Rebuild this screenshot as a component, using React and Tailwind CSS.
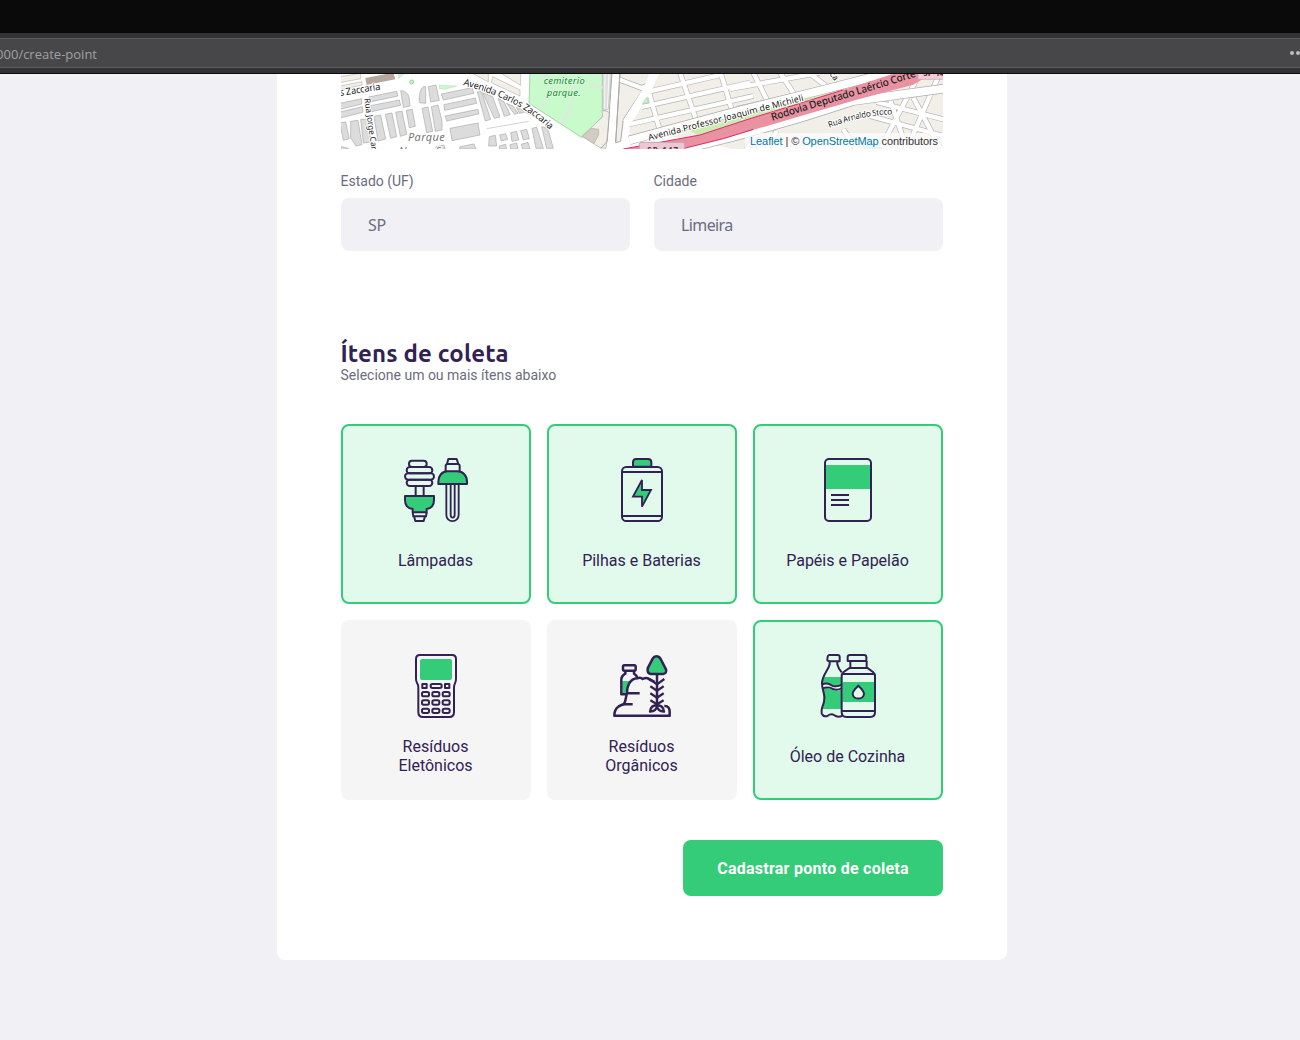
const INK = '#322153';
const GREEN = '#34CB79';

function Icon({ children }) {
  return (
    <svg
      viewBox="0 0 240 240"
      className="h-20 w-20 shrink-0"
      fill="none"
      stroke={INK}
      strokeWidth="6"
      strokeLinejoin="round"
      strokeLinecap="butt"
    >
      {children}
    </svg>
  );
}

function LampIcon() {
  return (
    <Icon>
      <rect x="39" y="32" width="53" height="19" rx="9" />
      <rect x="32" y="51" width="77" height="19" rx="9.500" />
      <rect x="27" y="70" width="87" height="19" rx="9.500" />
      <rect x="32" y="89" width="77" height="19" rx="9.500" />
      <path d="M59 108V138M83 108V138" />
      <path d="M27 138H114V150C114 166 105 175 92 177V187H50V177C36 175 27 166 27 150Z" fill={GREEN} />
      <path d="M50 187L52 199H90L92 187M54 199L58 213H83L87 199" />
      <path d="M153 42L157 27H182L187 42M149 64V48Q149 42 155 42H185Q191 42 191 48V64" />
      <path d="M127 102V95C127 77 138 64 155 64H184C201 64 213 77 213 95V102Z" fill={GREEN} />
      <path d="M151 102V195A18.500 18.500 0 0 0 188 195V102M164 102V195A5.500 7 0 0 0 176 195V102" strokeWidth="5.500" />
    </Icon>
  );
}

function BatteryIcon() {
  return (
    <Icon>
      <path d="M93 50V37Q93 27 103 27H138Q148 27 148 37V50Z" fill={GREEN} />
      <rect x="60" y="51" width="120" height="162" rx="13" />
      <path d="M60 66H180M60 198H180" />
      <path d="M120 90V120H147L120 170V140H93Z" fill={GREEN} strokeWidth="5.500" strokeLinejoin="miter" />
    </Icon>
  );
}

function PaperIcon() {
  return (
    <Icon>
      <rect x="53" y="45" width="134" height="72" fill={GREEN} stroke="none" />
      <rect x="51" y="27" width="138" height="186" rx="12" />
      <path d="M69 135H123M69 150H123M69 165H123" />
    </Icon>
  );
}

function TerminalIcon() {
  return (
    <Icon>
      <path d="M72 27H168Q180 27 180 39V99C180 112 174 112 174 124V198Q174 213 160 213H81Q67 213 67 198V124C67 112 60 112 60 99V39Q60 27 72 27Z" />
      <rect x="72" y="39" width="96" height="63" rx="6" fill={GREEN} stroke="none" />
      <g strokeWidth="6">
        <rect x="79" y="114" width="13" height="12" />
        <rect x="104" y="114" width="33" height="12" rx="5" />
        <rect x="147" y="114" width="13" height="12" />
        {[138, 163, 188].map((y) => (
          <g key={y}>
            <rect x="78" y={y} width="21" height="13" rx="5" />
            <rect x="109" y={y} width="21" height="13" rx="5" />
            <rect x="140" y={y} width="21" height="13" rx="5" />
          </g>
        ))}
      </g>
    </Icon>
  );
}

function OrganicIcon() {
  return (
    <Icon>
      <path d="M61 105H86L76 119L70 143H61Z" fill={GREEN} stroke="none" />
      <g strokeWidth="7.500">
        <rect x="63" y="58" width="38" height="16" rx="4" />
        <path d="M70 74V83Q58 90 58 101V145H75M96 74V83Q104 88 106 96" />
        <path d="M163 31Q156 31 152 38L137 67Q135 82 146 84H184Q195 82 192 70L176 39Q171 31 163 31Z" fill={GREEN} />
        <path d="M113 142H75C72 149 72 164 66 174Q56 178 49 182Q37 190 37 209H203V198Q203 179 187 180" />
        <path d="M92 175H63M75 142C75 115 87 98 106 97Q116 93 122 99Q135 92 145 102L157 107" />
        <path d="M165 84V181" />
        <path d="M143 99L165 115L187 99M145 121L165 134L185 121M145 142L165 155L185 142M145 163L165 175L185 163" strokeWidth="7" />
        <path d="M165 177Q146 178 144 197L154 195Q165 190 165 177Q165 190 176 195L186 197Q184 178 165 177ZM165 177V185" strokeWidth="7" />
      </g>
    </Icon>
  );
}

function OilIcon() {
  return (
    <Icon>
      <path d="M47 93H101V117C80 126 74 111 43 114ZM43 128Q64 123 74 131T101 130V189H41L48 165Z" fill={GREEN} stroke="none" />
      <rect x="104" y="108" width="94" height="60" fill={GREEN} stroke="none" />
      <path d="M64 46L58 43Q58 27 64 27H89Q95 27 95 33V46Z" />
      <path d="M65 46V55C61 73 42 89 42 112C42 138 54 142 48 167C43 186 38 190 41 202Q46 214 58 210Q69 202 78 207Q88 215 102 210M88 46V55Q91 68 101 79" />
      <path d="M42 116C59 107 66 117 76 120Q88 123 102 116M43 128C61 120 67 125 75 129Q88 134 102 126" />
      <path d="M119 45V33Q119 27 126 27H168Q175 27 175 33V45Z" />
      <path d="M127 45V64L107 78Q101 83 101 91V199Q101 213 115 213H187Q201 213 201 199V91Q201 83 195 78L176 64V45M124 66H178M104 84H198M102 195H200" />
      <path d="M151 119Q133 136 134 144C136 162 166 162 168 144Q169 136 151 119Z" fill="#E1FAEC" />
    </Icon>
  );
}

const items = [
  { icon: LampIcon, title: 'Lâmpadas', selected: true },
  { icon: BatteryIcon, title: 'Pilhas e Baterias', selected: true },
  { icon: PaperIcon, title: 'Papéis e Papelão', selected: true },
  { icon: TerminalIcon, title: 'Resíduos Eletônicos', selected: false },
  { icon: OrganicIcon, title: 'Resíduos Orgânicos', selected: false },
  { icon: OilIcon, title: 'Óleo de Cozinha', selected: true },
];

function MapView() {
  const halo = { stroke: '#fff', strokeWidth: 6, paintOrder: 'stroke', strokeLinejoin: 'round' };
  return (
    <div className="relative h-[75px] w-full overflow-hidden">
      <svg viewBox="341 74 602 75" className="block h-full w-full" fontFamily='"Noto Sans", sans-serif'>
        <rect x="341" y="73" width="602" height="76" fill="#fff" />

        {/* west side: city blocks */}
        <g transform="translate(330 66) scale(.33333)">
          <g fill="#f2efe9" stroke="#bbb5ad" strokeWidth="2">
            <path d="M30 32L92 22V38L30 50ZM30 60L96 47V57L30 72ZM425 20H475V48ZM488 32L570 72V90L484 50ZM510 20H572V58Z" />
          </g>
          <path d="M106 36L190 20L196 40L110 57Z" fill="#b5a79b" />
          <path d="M205 38V22H222ZM328 58L380 60L345 70L328 68Z" fill="#c8facc" stroke="#9ccba3" />
          <circle cx="245" cy="48" r="6" fill="#c8facc" stroke="#7cae8b" strokeWidth="2" />
          <g fill="#dcdcdc" stroke="#aaa" strokeWidth="2">
            <path d="M30 112L95 98V114L30 130ZM117 93L200 76L204 90L120 108ZM30 138L98 122V139L30 156ZM122 119L208 102L212 118L124 137Z" />
            <path d="M212 74Q230 74 237 92L240 120L220 124ZM268 110Q266 72 280 62H287V112ZM295 62L318 57L328 103L302 108Z" />
            <path d="M334 84L426 65L432 82L340 102ZM342 116L436 96L440 112L344 133ZM346 150L444 130L446 144L350 165Z" />
            <path d="M276 127L294 123L308 196L290 200ZM304 122L324 117L336 165V192L316 196Z" />
            <path d="M360 187L444 171L450 207L366 224Z" />
            <path d="M30 170L47 168L58 218L40 223ZM62 166L84 163L96 236L78 240L62 216ZM92 160H112L124 228L100 231ZM132 151L152 147L167 219L144 225ZM166 145L186 141L200 212L182 217ZM197 139L216 135L230 205L211 211ZM229 133L247 130L256 181L238 185Z" />
            <path d="M442 78L454 76L482 160L466 165ZM458 80L488 92L510 153L493 157ZM504 97L522 107L541 146L523 151ZM530 112L550 121L564 142L554 145ZM560 124L574 130L582 139L568 142Z" />
            <path d="M478 212L496 208L500 240H476ZM509 207L527 203L533 220L514 225ZM542 200L560 196L566 222L546 226ZM572 194L590 190L598 218L580 222ZM606 188L620 183L640 247H618ZM635 182L653 187L670 247H650Z" />
            <path d="M390 242L432 234L438 249H388ZM508 240L526 235L530 249H508ZM540 236L560 231L564 249H542ZM574 235L594 229L600 249H578ZM318 242L342 237L346 249H318ZM30 241L55 247V250H30Z" />
          </g>
          <path d="M470 188L596 166M584 139L650 167" stroke="#bbb" strokeWidth="2" fill="none" />
          <g fontSize="29" fill="#222" {...halo}>
            <text transform="translate(30 90) rotate(-9)" textLength="124">s Zaccaria</text>
            <text transform="translate(103 98) rotate(82)" fontSize="25" textLength="162">Rua Jorge Carl</text>
            <text x="234" y="224" fontSize="33" fontStyle="italic" fill="#777" textLength="110">Parque</text>
            <text x="206" y="266" fontSize="33" fontStyle="italic" fill="#777" textLength="128">Nossa S</text>
          </g>
        </g>

        {/* cemetery park and the eastern neighbourhood */}
        <g transform="translate(520 66) scale(.33333)">
          <path d="M30 20H247V132L262 136L186 215L27 112Z" fill="#c8facc" stroke="#8ebe94" strokeWidth="2" />
          <path d="M248 20H276L265 130L248 132Z" fill="#ddd" stroke="#bbb" strokeWidth="2" />
          <path d="M255 20L254 128M267 20L262 128" stroke="#f8f8f8" strokeWidth="3" />
          <path d="M258 135L270 140L258 247L240 245L186 211L248 152L246 134Z" fill="#f2efe9" stroke="#aaa" strokeWidth="2" />
          <path d="M188 211L213 187L236 190V206L222 233Z" fill="#d1ccc5" stroke="#bbb09c" strokeWidth="2" />
          <g stroke="#ddebdc" strokeWidth="8" fill="none">
            <path d="M58 124L86 94L100 60L80 20M125 170Q160 130 158 86L166 45L248 65M80 20L60 40L166 45" />
          </g>
          <path d="M300 20H404L374 62L310 160L302 226L287 230Z" fill="#f2efe9" stroke="#aaa" strokeWidth="3" />
          <path d="M295 40L365 66L380 60" fill="none" stroke="#aaa" strokeWidth="17" />
          <path d="M295 40L365 66L380 60" fill="none" stroke="#fff" strokeWidth="13" />
          <path d="M420 20H1270V250H640L450 210L328 220V182Z" fill="#f2efe9" />
          <g fill="none" stroke="#b7b7b7" strokeWidth="17">
            <path d="M328 175L700 90M365 123L690 50M385 77L610 25M480 20L534 178M382 62L420 195M602 20L650 180M700 20L760 140M630 69L900 20M650 128L910 72M780 20L836 105M866 20L925 65M1200 20L1080 250M1260 20L1160 250M1070 108L1270 160M1050 150L1270 210M970 190L1010 250M1110 100L1160 247M1180 95L1260 245M680 249L710 205M740 249L770 195" />
          </g>
          <g fill="none" stroke="#fff" strokeWidth="13">
            <path d="M328 175L700 90M365 123L690 50M385 77L610 25M480 20L534 178M382 62L420 195M602 20L650 180M700 20L760 140M630 69L900 20M650 128L910 72M780 20L836 105M866 20L925 65M1200 20L1080 250M1260 20L1160 250M1070 108L1270 160M1050 150L1270 210M970 190L1010 250M1110 100L1160 247M1180 95L1260 245M680 249L710 205M740 249L770 195" />
          </g>
          <path d="M402 20L385 66L320 170" stroke="#fff" strokeWidth="25" fill="none" />
          <path d="M368 112L380 95L385 111Z" fill="#c8facc" stroke="#9ccba3" strokeWidth="2" />
          <path d="M276 20L262 225L242 248M300 20L287 228" stroke="#aaa" strokeWidth="3" fill="none" />
          <path d="M288 20L272 250" stroke="#fff" strokeWidth="18" />
          <path d="M328 223L650 136L900 74L1110 20" stroke="#aaa" strokeWidth="28" fill="none" />
          <path d="M328 223L650 136L900 74L1110 20" stroke="#fff" strokeWidth="24" fill="none" />
          <path d="M500 190L660 148L900 88L960 74V100L540 211Z" fill="#cdebb0" />
          <path d="M430 265L650 210L850 153L1000 105L1270 68" stroke="#aaa" strokeWidth="28" fill="none" />
          <path d="M430 265L650 210L850 153L1000 105L1270 68" stroke="#fff" strokeWidth="24" fill="none" />
          <path d="M310 249L540 207L690 158L970 72L1130 20H1240L1180 56L1010 101L840 151L610 218L480 250Z" fill="#e892a2" />
          <path d="M310 249L540 207L690 158L970 72M480 250L610 218L700 190" stroke="#dc2a67" strokeWidth="3" fill="none" />
          <rect x="358" y="229" width="136" height="30" rx="6" fill="#eac8d2" stroke="#c9a3b0" strokeWidth="3" />
          <text x="382" y="260" fontSize="24" fontWeight="700" fill="#6d2848" textLength="92">SP-147</text>
          <path d="M1194 20H1270V40H1194Z" fill="#f0ced7" stroke="#c9a3b0" strokeWidth="2" />
          <text x="1210" y="31" fontSize="24" fontWeight="700" fill="#6d2848">SP-147</text>
          <path d="M1025 233L1070 235L1092 250H1035Z" fill="#aae0cb" />
          <g fill="#222" {...halo}>
            <g fontSize="28" fontStyle="italic" fill="#198539" stroke="#d5fbd8">
              <text x="71" y="53" textLength="123">cemiterio</text>
              <text x="80" y="89" textLength="102">parque.</text>
            </g>
            <text transform="translate(387 224) rotate(-14.500)" fontSize="27" textLength="480">Avenida Professor Joaquim de Michieli</text>
            <text transform="translate(757 164) rotate(-17)" fontSize="31" fontWeight="500" stroke="#e892a2" textLength="452">Rodovia Deputado Laércio Corte</text>
            <path id="stoco" d="M928 185Q1035 145 1122 145" fill="none" stroke="none" />
            <text fontSize="25"><textPath href="#stoco" textLength="194">Rua Arnaldo Stoco</textPath></text>
            <text transform="translate(928 25) rotate(52)" fontSize="25">ca</text>
          </g>
        </g>

        <path id="zaccaria" d="M463 85C495 94 525 105 551 131" fill="none" />
        <text fontSize="9.500" fill="#222" stroke="#fff" strokeWidth="2" style={{ paintOrder: 'stroke' }}>
          <textPath href="#zaccaria" textLength="99">Avenida Carlos Zaccaria</textPath>
        </text>
      </svg>
      <div className="absolute right-0 bottom-0 h-4 bg-white/70 px-[5px] font-['Liberation_Sans',sans-serif] text-[11px] leading-4 tracking-[-0.09px] whitespace-nowrap text-[#333]">
        <span className="text-[#0078A8]">Leaflet</span> | © <span className="text-[#0078A8]">OpenStreetMap</span> contributors
      </div>
    </div>
  );
}

function BrowserBar() {
  return (
    <header>
      <div className="h-[33px] bg-[#0a0a0a]" />
      <div className="h-[41px] border-b border-[#0a0a0a] bg-[#323234] pt-[5px]">
        <div className="flex h-[30px] items-center justify-between overflow-hidden border-y border-[#5b5b5d] bg-[#474749] font-['Open_Sans',sans-serif] text-[13px] text-[#a0a0a2]">
          <span className="ml-[-7px] w-[104px] pt-1 text-right whitespace-nowrap">000/create-point</span>
          <span className="mr-[-6px] flex gap-[2px]">
            {[0, 1, 2].map((n) => (
              <i key={n} className="h-1 w-1 rounded-full bg-[#bdbdbf]" />
            ))}
          </span>
        </div>
      </div>
    </header>
  );
}

function Field({ label, value, valueClass }) {
  return (
    <div className="flex-1">
      <label className="-ml-[0.5px] block h-[25px] text-sm leading-4 text-[#6C6C80]">{label}</label>
      <div className="flex h-[53px] items-center rounded-lg bg-[#F0F0F5] pl-[27px] font-['Noto_Sans',sans-serif] text-base text-[#6C6C80]">
        <span className={valueClass}>{value}</span>
      </div>
    </div>
  );
}

export default function App() {
  return (
    <div className="h-[1040px] w-[1300px] overflow-hidden bg-[#F0F0F5] font-[Roboto,sans-serif]">
      <BrowserBar />
      <main className="ml-[277px] h-[886px] w-[730px] rounded-b-lg bg-white px-16">
        <MapView />
        <div className="mt-6 flex gap-6">
          <Field label="Estado (UF)" value="SP" valueClass="tracking-[-0.3px]" />
          <Field label="Cidade" value="Limeira" valueClass="tracking-[-0.6px]" />
        </div>
        <h2 className="mt-[87px] -ml-[0.5px] h-[29px] font-[Ubuntu,'Noto_Sans',sans-serif] text-2xl leading-8 font-bold tracking-[0.15px] text-[#322153]">
          Ítens de coleta
        </h2>
        <p className="-ml-[0.5px] text-sm leading-4 text-[#6C6C80]">Selecione um ou mais ítens abaixo</p>
        <ul className="mt-[41px] grid grid-cols-3 gap-4">
          {items.map(({ icon: Drawing, title, selected }) => (
            <li
              key={title}
              className={
                selected
                  ? 'flex h-[180px] flex-col items-center rounded-lg border-2 border-[#34CB79] bg-[#E1FAEC] pt-6'
                  : 'flex h-[180px] flex-col items-center rounded-lg border-2 border-[#f5f5f5] bg-[#f5f5f5] pt-6'
              }
            >
              <Drawing />
              <span className="mt-1 mr-px flex h-[52px] w-[125px] items-center justify-center text-center text-base leading-[19px] text-[#322153]">
                {title}
              </span>
            </li>
          ))}
        </ul>
        <button className="mt-10 ml-auto block h-14 w-[260px] rounded-lg bg-[#34CB79] pt-0.5 text-base font-bold tracking-[0.25px] text-white">
          Cadastrar ponto de coleta
        </button>
      </main>
    </div>
  );
}
